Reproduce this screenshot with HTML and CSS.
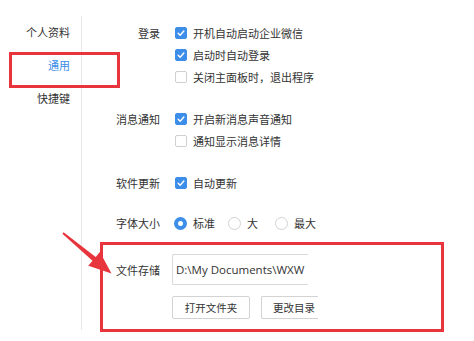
FILE: index.html
```html
<!DOCTYPE html>
<html lang="zh-CN">
<head>
<meta charset="utf-8">
<title>设置 - 通用</title>
<link rel="stylesheet" href="styles.css">
</head>
<body>
<div class="page">
  <aside class="sidebar">
    <div class="nav-item">个人资料</div>
    <div class="nav-item active">通用</div>
    <div class="nav-item">快捷键</div>
  </aside>

  <main class="settings">
    <section class="group">
      <div class="label">登录</div>
      <div class="options">
        <div class="opt"><span class="cb checked"><svg viewBox="0 0 12 12"><polyline points="2.6,6.2 5,8.6 9.4,3.6"/></svg></span>开机自动启动企业微信</div>
        <div class="opt"><span class="cb checked"><svg viewBox="0 0 12 12"><polyline points="2.6,6.2 5,8.6 9.4,3.6"/></svg></span>启动时自动登录</div>
        <div class="opt"><span class="cb"></span>关闭主面板时，退出程序</div>
      </div>
    </section>

    <section class="group">
      <div class="label">消息通知</div>
      <div class="options">
        <div class="opt"><span class="cb checked"><svg viewBox="0 0 12 12"><polyline points="2.6,6.2 5,8.6 9.4,3.6"/></svg></span>开启新消息声音通知</div>
        <div class="opt"><span class="cb"></span>通知显示消息详情</div>
      </div>
    </section>

    <section class="group">
      <div class="label">软件更新</div>
      <div class="options">
        <div class="opt"><span class="cb checked"><svg viewBox="0 0 12 12"><polyline points="2.6,6.2 5,8.6 9.4,3.6"/></svg></span>自动更新</div>
      </div>
    </section>

    <section class="group group-font">
      <div class="label">字体大小</div>
      <div class="options">
        <div class="radios">
          <div class="opt"><span class="rb checked"></span>标准</div>
          <div class="opt opt-big"><span class="rb"></span>大</div>
          <div class="opt"><span class="rb"></span>最大</div>
        </div>
      </div>
    </section>

    <section class="group group-file">
      <div class="label label-file">文件存储</div>
      <div class="file-col">
        <div class="path-box"><span class="path-text">D:\My Documents\WXW</span></div>
        <div class="btn-row">
          <button class="btn btn-open">打开文件夹</button>
          <button class="btn btn-change">更改目录</button>
        </div>
      </div>
    </section>
  </main>

  <div class="mark mark-nav"></div>
  <div class="mark mark-file"></div>
  <svg class="arrow" viewBox="0 0 474 341" aria-hidden="true">
    <polygon points="63.6,232.3 95.7,257 99.9,252 111.5,273.5 88.3,265.8 92.5,260.8 62.4,233.7"/>
  </svg>
</div>
</body>
</html>
```

FILE: styles.css
```css
* {
  box-sizing: border-box;
}

html, body {
  margin: 0;
  padding: 0;
  background: #ffffff;
}

body {
  font-family: "Noto Sans CJK SC", "Noto Sans", sans-serif;
  font-size: 11px;
  color: #333333;
}

.page {
  position: relative;
  width: 474px;
  height: 341px;
  display: flex;
  align-items: flex-start;
  overflow: hidden;
}

/* ---------- sidebar ---------- */
.sidebar {
  box-sizing: content-box;
  width: 81px;
  height: 314px;
  margin-top: 16px;
  border-right: 1px solid #e8e8e8;
  display: flex;
  flex-direction: column;
}

.nav-item {
  height: 33px;
  line-height: 33px;
  padding-right: 11px;
  text-align: right;
  color: #333333;
}

.nav-item.active {
  color: #3d8ee8;
}

/* ---------- settings ---------- */
.settings {
  flex: 1;
  padding-top: 22px;
  display: flex;
  flex-direction: column;
  gap: 20px;
}

.group {
  display: grid;
  grid-template-columns: 78px auto;
  column-gap: 15px;
  align-items: start;
}

.group-font {
  margin-top: -2px;
}

.label {
  line-height: 22px;
  text-align: right;
  color: #333333;
}

.options {
  display: flex;
  flex-direction: column;
}

.opt {
  height: 22px;
  display: flex;
  align-items: center;
  white-space: nowrap;
}

.cb {
  width: 12px;
  height: 12px;
  margin-right: 6px;
  border: 1px solid #cfcfcf;
  border-radius: 2px;
  background: #ffffff;
  display: inline-flex;
  flex: none;
}

.cb.checked {
  background: #3d8ee8;
  border-color: #3d8ee8;
}

.cb svg {
  width: 10px;
  height: 10px;
}

.cb polyline {
  fill: none;
  stroke: #ffffff;
  stroke-width: 1.7;
  stroke-linecap: round;
  stroke-linejoin: round;
}

.radios {
  display: flex;
  gap: 13px;
  margin-left: -1px;
}

.opt-big {
  margin-right: 4px;
}

.rb {
  width: 13px;
  height: 13px;
  margin-right: 6px;
  border: 1px solid #d2d2d2;
  border-radius: 50%;
  background: #ffffff;
  flex: none;
}

.rb.checked {
  border: 4px solid #3d8ee8;
  background: #ffffff;
}

/* ---------- file storage ---------- */
.group-file {
  column-gap: 12px;
  align-items: center;
  grid-template-rows: 31px auto;
}

.label-file {
  grid-row: 1;
  align-self: center;
}

.file-col {
  grid-row: 1 / span 2;
  display: flex;
  flex-direction: column;
  gap: 11px;
}

.path-box {
  width: 136px;
  height: 31px;
  border: 1px solid #d9d9d9;
  border-right: none;
  border-radius: 2px 0 0 2px;
  padding-left: 3px;
  display: flex;
  align-items: center;
  white-space: nowrap;
}

.path-text {
  font-family: "Open Sans", "Noto Sans", sans-serif;
  font-size: 11.5px;
  color: #333333;
}

.btn-row {
  display: flex;
  gap: 11px;
}

.btn {
  height: 23px;
  padding: 0;
  border: 1px solid #d3d3d3;
  border-radius: 2px;
  background: #ffffff;
  font-family: "Noto Sans CJK SC", "Noto Sans", sans-serif;
  font-size: 10.5px;
  color: #333333;
  white-space: nowrap;
}

.btn-open {
  width: 78px;
}

.btn-change {
  width: 57px;
  border-right: none;
  border-radius: 2px 0 0 2px;
  text-align: left;
  padding-left: 11px;
}

/* ---------- annotations ---------- */
.mark {
  position: absolute;
  border: 3px solid #e8343c;
  pointer-events: none;
}

.mark-nav {
  left: 9px;
  top: 52px;
  width: 111px;
  height: 36px;
}

.mark-file {
  left: 100px;
  top: 242px;
  width: 344px;
  height: 90px;
}

.arrow {
  position: absolute;
  left: 0;
  top: 0;
  width: 474px;
  height: 341px;
  pointer-events: none;
}

.arrow polygon {
  fill: #e8343c;
}
```
